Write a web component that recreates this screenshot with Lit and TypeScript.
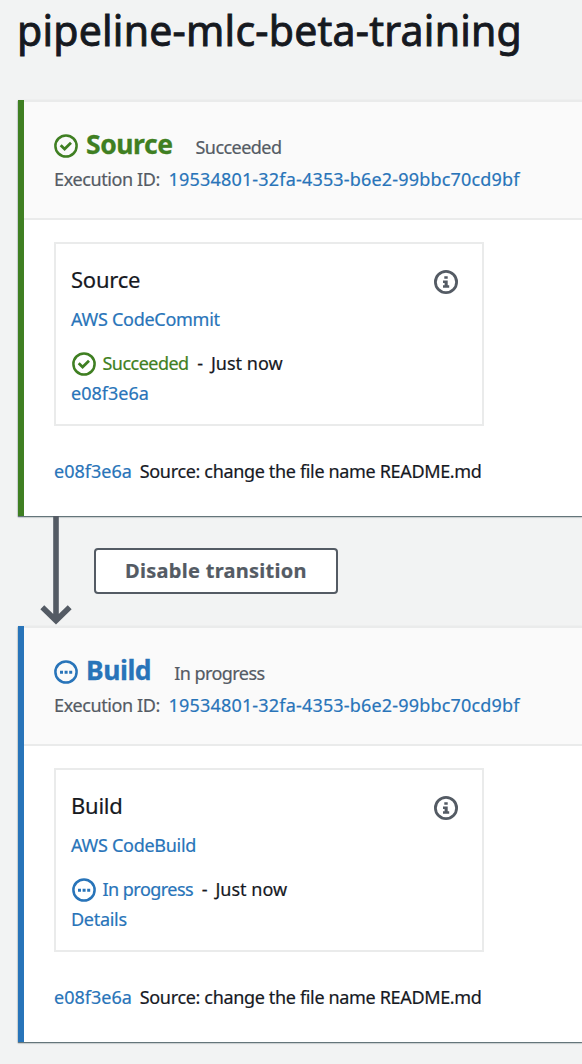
import { LitElement, html, svg, css } from "lit";
import { customElement, property } from "lit/decorators.js";

type Status = "succeeded" | "progress" | "info";

@customElement("status-icon")
class StatusIcon extends LitElement {
  @property() kind: Status = "info";
  static styles = css`
    :host { display: block; width: 24px; height: 24px; flex: none; }
    svg { display: block; }
    .ring { fill: none; stroke: currentColor; stroke-width: 2.8; }
    .ring.thin { stroke-width: 2.5; }
    .tick { fill: none; stroke: currentColor; stroke-width: 2.8; }
    .solid { fill: currentColor; }
  `;
  render() {
    const glyph =
      this.kind === "succeeded"
        ? svg`<path class="tick" d="M6.7 11.3 L10.6 15 L17 8.8"/>`
        : this.kind === "progress"
        ? svg`<path class="solid" d="M6 10.7h3v3h-3z M10.6 10.7h3v3h-3z M15.2 10.7h3v3h-3z"/>`
        : svg`<path class="solid" d="M10.3 6.2h3.4v2.6h-3.4z M9 10.4h4.7v4.9h1.5v2.5H9v-2.5h1.6v-2.4H9z"/>`;
    return html`<svg width="24" height="24" viewBox="0 0 24 24">
      <circle class="ring ${this.kind === "info" ? "" : "thin"}" cx="12" cy="12" r="10.6"></circle>
      ${glyph}
    </svg>`;
  }
}

interface Stage {
  name: string;
  kind: Status;
  status: string;
  provider: string;
  link: string;
}

@customElement("pipeline-stage")
class PipelineStage extends LitElement {
  @property({ attribute: false }) stage!: Stage;
  static styles = css`
    :host { display: block; }
    .panel { box-sizing: border-box; height: 416px; border-left: 6px solid; background: #fff;
      box-shadow: 0 1px 1px rgba(0, 28, 36, .5), 0 1px 2px rgba(0, 28, 36, .25); white-space: nowrap; }
    .succeeded { color: #3f7f22; }
    .progress { color: #2874b9; }
    header { box-sizing: border-box; height: 120px; padding: 27px 0 0 30px; background: #fafafa;
      border-top: 2px solid #eaebeb; border-bottom: 2px solid #eaebeb; }
    .heading { display: flex; height: 34px; align-items: center; }
    h2 { margin: -5px 0 0 8px; font-size: 26.5px; line-height: 34px; font-weight: 700;
      letter-spacing: -.45px; -webkit-text-stroke: .3px; }
    .state { margin: 2px 0 0 23px; color: #545b64; letter-spacing: -.55px; }
    .exec { display: flex; gap: 8.5px; line-height: 30px; margin-top: 1px; color: #545b64; }
    .exec .label { letter-spacing: -.38px; }
    .exec .id { letter-spacing: .18px; }
    a { color: #2874b9; }
    .body { padding: 22px 30px 0; color: #16191f; }
    .card { box-sizing: border-box; width: 430px; height: 184px; border: 2px solid #eaebeb; padding: 22px 24px 0 15px; }
    .top { display: flex; justify-content: space-between; align-items: center; height: 32px; }
    .top status-icon { color: #545b64; }
    h3 { margin: -7px 0 0; font-size: 22px; line-height: 32px; font-weight: 400; letter-spacing: -.25px; }
    .provider { line-height: 30px; margin-top: 6px; letter-spacing: -.28px; }
    .run { display: flex; align-items: center; height: 30px; margin-top: 14px; line-height: 30px; }
    .run status-icon { margin: 2px 0 0 1px; }
    .run .state-text { margin-left: 6.5px; letter-spacing: -.53px; }
    .run .dash { margin-left: 8.5px; color: #16191f; }
    .run .when { margin-left: 8px; color: #16191f; }
    .detail { line-height: 30px; }
    .detail.progress { letter-spacing: -.3px; }
    .commit { display: flex; gap: 8px; line-height: 30px; margin-top: 30px; }
    .commit .message { letter-spacing: -.34px; }
  `;
  render() {
    const s = this.stage;
    return html`<section class="panel ${s.kind}">
      <header>
        <div class="heading">
          <status-icon .kind=${s.kind}></status-icon>
          <h2>${s.name}</h2><span class="state">${s.status}</span>
        </div>
        <div class="exec"><span class="label">Execution ID:</span><a class="id">19534801-32fa-4353-b6e2-99bbc70cd9bf</a></div>
      </header>
      <div class="body">
        <div class="card">
          <div class="top"><h3>${s.name}</h3><status-icon kind="info"></status-icon></div>
          <div class="provider"><a>${s.provider}</a></div>
          <div class="run ${s.kind}"><status-icon .kind=${s.kind}></status-icon><span class="state-text">${s.status}</span><span class="dash">-</span><span class="when">Just now</span></div>
          <div class="detail ${s.kind}"><a>${s.link}</a></div>
        </div>
        <div class="commit"><a>e08f3e6a</a><span class="message">Source: change the file name README.md</span></div>
      </div>
    </section>`;
  }
}

@customElement("app-root")
class AppRoot extends LitElement {
  static styles = css`
    :host { display: block; box-sizing: border-box; height: 1064px; overflow: hidden; padding-left: 18px;
      background: #f2f3f3; font: 18px "Noto Sans", sans-serif; color: #16191f; -webkit-text-stroke: .2px; }
    h1 { margin: 0 0 0 -1px; height: 100px; font-size: 41px; line-height: 60px; font-weight: 400; white-space: nowrap;
      letter-spacing: .23px; -webkit-text-stroke: .9px; }
    .transition { display: flex; height: 110px; }
    .arrow { display: block; margin-left: 20px; }
    button { box-sizing: border-box; width: 244px; height: 46px; margin: 32px 0 0 20px; padding: 0;
      border: 2px solid #545b64; border-radius: 4px; background: #fff; color: #545b64;
      font: 700 20px/42px "Noto Sans", sans-serif; letter-spacing: .28px; }
    pipeline-stage, .transition { position: relative; }
  `;
  render() {
    return html`<h1>pipeline-mlc-beta-training</h1>
      <pipeline-stage .stage=${{ name: "Source", kind: "succeeded", status: "Succeeded", provider: "AWS CodeCommit", link: "e08f3e6a" }}></pipeline-stage>
      <div class="transition">
        <svg class="arrow" width="36" height="110" viewBox="0 0 36 110">
          <path d="M18 0V103M4.3 91.3L18 104.5L31.7 91.3" fill="none" stroke="#545b64" stroke-width="5.6"></path>
        </svg>
        <button>Disable transition</button>
      </div>
      <pipeline-stage .stage=${{ name: "Build", kind: "progress", status: "In progress", provider: "AWS CodeBuild", link: "Details" }}></pipeline-stage>`;
  }
}
